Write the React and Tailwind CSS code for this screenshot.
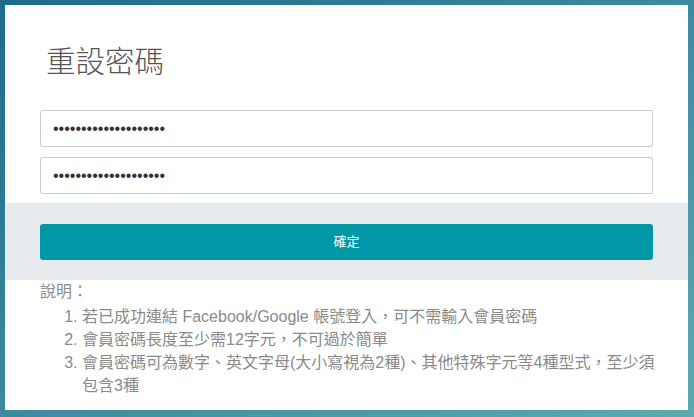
import React from 'react';

const FONT = { fontFamily: '"Liberation Sans", "Noto Sans CJK TC", sans-serif' };

export default function App() {
    return (
        <div className="h-[417px] w-[694px] bg-linear-to-br from-[#1d6a8c] to-[#5aabb1] pt-[5px] pl-[5px]" style={FONT}>
            <div className="flex h-[405px] w-[683px] flex-col bg-white">
                {/* title + inputs */}
                <div className="px-[35px]">
                    <h1 className="pt-[42px] pl-[6px] text-[29.5px] font-light leading-[29px] text-[#555]">重設密碼</h1>
                    <div className="mt-[34px] flex flex-col gap-[10px]">
                        <input
                            type="password"
                            defaultValue="aaaaaaaaaaaaaaaaaaaa"
                            className="h-[37px] w-full rounded-[2px] border border-[#ccc] px-3 text-base text-[#333] outline-none"
                            style={FONT}
                        />
                        <input
                            type="password"
                            defaultValue="aaaaaaaaaaaaaaaaaaaa"
                            className="h-[37px] w-full rounded-[2px] border border-[#ccc] px-3 text-base text-[#333] outline-none"
                            style={FONT}
                        />
                    </div>
                </div>

                {/* confirm band */}
                <div className="mt-[9px] bg-[#e8ebee] px-[35px] pt-[21px] pb-[20px]">
                    <button className="h-[36px] w-full rounded-[3px] bg-[#0097a7] text-[13px] text-white">確定</button>
                </div>

                {/* notes */}
                <div className="pr-[26px] pl-[35px] text-[16px] leading-[23px] text-[#8a8a8a]">
                    <p>說明：</p>
                    <ol className="mt-[2px] list-decimal pl-[42px]">
                        <li>若已成功連結 Facebook/Google 帳號登入，可不需輸入會員密碼</li>
                        <li>會員密碼長度至少需12字元，不可過於簡單</li>
                        <li>會員密碼可為數字、英文字母(大小寫視為2種)、其他特殊字元等4種型式，至少須包含3種</li>
                    </ol>
                </div>
            </div>
        </div>
    );
}
